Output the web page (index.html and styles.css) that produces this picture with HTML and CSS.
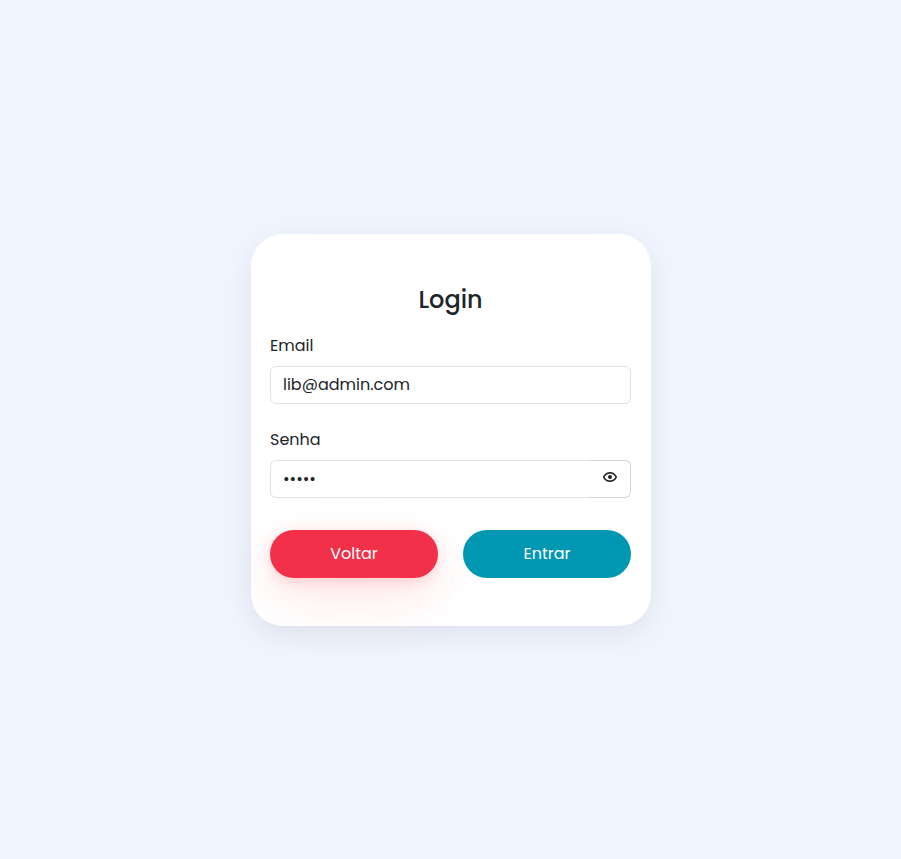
FILE: index.html
```html
<!DOCTYPE html>
<html lang="pt-BR">
<head>
<meta charset="utf-8">
<title>Login</title>
<link rel="stylesheet" href="styles.css">
</head>
<body>
<main class="card">
  <h1 class="title">Login</h1>
  <form>
    <label class="label" for="email">Email</label>
    <input class="field" id="email" type="text" value="lib@admin.com">
    <label class="label" for="senha">Senha</label>
    <div class="group">
      <input class="field password" id="senha" type="password" value="admin">
      <button class="eye" type="button" aria-label="Mostrar senha">
        <svg width="16" height="16" viewBox="0 0 24 24" fill="currentColor"><path d="M12 9a3 3 0 1 0 0 6 3 3 0 0 0 0-6z"/><path d="M12 4.500c-7.900 0-10.400 7.200-10.450 7.200L1.450 12l.1.320C1.600 12.300 4.100 19.500 12 19.500s10.400-7.200 10.450-7.200l.1-.3-.1-.320C22.400 11.700 19.900 4.500 12 4.500zm0 12.500c-5.350 0-7.600-3.850-8.130-5C4.400 10.840 6.650 7 12 7s7.600 3.850 8.130 5C19.600 13.160 17.350 17 12 17z"/></svg>
      </button>
    </div>
    <div class="actions">
      <button class="btn back" type="button">Voltar</button>
      <button class="btn enter" type="button">Entrar</button>
    </div>
  </form>
</main>
</body>
</html>
```

FILE: styles.css
```css
* { box-sizing: border-box; }
body {
  margin: 0;
  height: 859px;
  padding: 1px 0 0 1px;
  display: flex;
  align-items: center;
  justify-content: center;
  background: #f0f5ff;
  color: #212529;
  font: 16px/24px Poppins, Lato, "Open Sans", sans-serif;
}
.card {
  width: 400px;
  height: 392px;
  padding: 51px 20px 0 19px;
  background: #fff;
  border-radius: 32px;
  box-shadow: 0 8px 32px rgba(0, 0, 0, .08);
}
.title { margin: 0 0 19px; font-size: 24px; line-height: 30px; font-weight: 500; text-align: center; }
.label { display: block; height: 24px; margin-bottom: 8px; }
.field {
  display: block;
  width: 100%;
  height: 38px;
  margin: 0 0 24px;
  padding: 5px 12px 7px;
  color: inherit;
  font: inherit;
  background: none;
  border: 1px solid #dee2e6;
  border-radius: 6px;
  outline: 0;
}
.group { display: flex; margin-bottom: 32px; }
.password { flex: 1; min-width: 0; margin: 0; border-right: 0; border-radius: 6px 0 0 6px; }
.eye {
  width: 41px;
  height: 38px;
  padding: 0 0 4px;
  display: flex;
  align-items: center;
  justify-content: center;
  color: #212529;
  background: none;
  border: 1px solid #ced4da;
  border-left: 0;
  border-radius: 0 6px 6px 0;
}
.actions { display: flex; gap: 25px; }
.btn { width: 168px; height: 48px; padding: 0; border: 0; border-radius: 24px; color: #fff; font: inherit; }
.back { background: #f2304a; box-shadow: 0 3px 12px rgba(255, 40, 70, .15), 0 12px 32px rgba(255, 75, 75, .1), 0 24px 64px rgba(255, 75, 75, .08); }
.enter { background: #0097b2; }
```
